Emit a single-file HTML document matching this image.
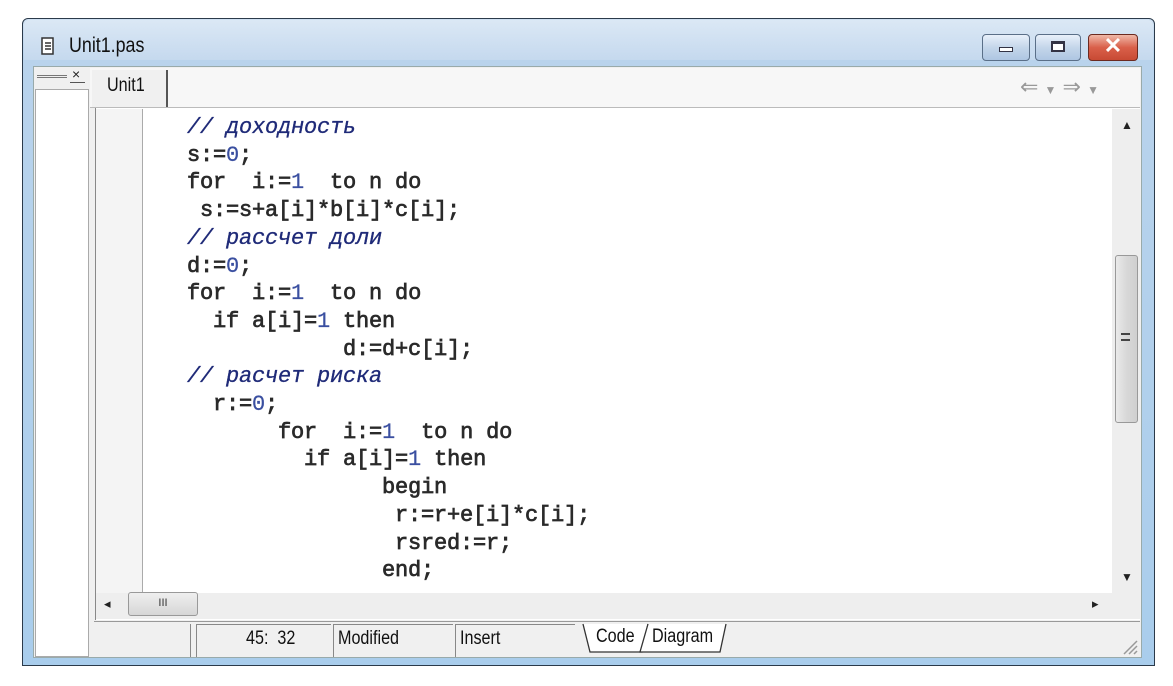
<!DOCTYPE html>
<html><head><meta charset="utf-8"><style>
*{margin:0;padding:0;box-sizing:border-box}
body{width:1173px;height:686px;background:#fff;position:relative;overflow:hidden;font-family:"Liberation Sans",sans-serif}
.a{position:absolute}
.code{font-family:"Liberation Mono",monospace;font-size:22px;color:#2a2a2a;font-weight:normal;-webkit-text-stroke:0.7px #2a2a2a;white-space:pre;letter-spacing:-0.2px}
.c{color:#1f2a78;font-style:italic;-webkit-text-stroke:0.3px #1f2a78}
.n{color:#3a4fa0;-webkit-text-stroke:0.2px #3a4fa0}
.nar{transform:scaleX(0.85);transform-origin:left}
</style></head><body>
<div class="a" style="left:22px;top:18px;width:1133px;height:648px;border:1px solid #2b3a4a;border-radius:6px 6px 0 0;background:linear-gradient(#cfe0f2,#b9d3ec 40px,#a9cdec)"></div>
<div class="a" style="left:24px;top:20px;width:1129px;height:40px;background:linear-gradient(#dbe8f5,#c5d9ee);border-radius:5px 5px 0 0"></div>
<svg class="a" style="left:40px;top:37px" width="16" height="20"><rect x="2" y="1" width="11" height="16" fill="#fff" stroke="#333" stroke-width="1.5"/><path d="M5 6h6M5 9h6M5 12h6" stroke="#333" stroke-width="1.5"/></svg>
<div class="a nar" style="left:69px;top:34px;font-size:21px;color:#111">Unit1.pas</div>
<div class="a" style="left:982px;top:34px;width:48px;height:27px;border:1px solid #5a6f88;border-radius:4px;background:linear-gradient(#e8f0fa,#c4d6ea 50%,#aec6e2)"></div>
<div class="a" style="left:999px;top:47px;width:14px;height:5px;border:1.5px solid #334;background:#fff"></div>
<div class="a" style="left:1035px;top:34px;width:46px;height:27px;border:1px solid #5a6f88;border-radius:4px;background:linear-gradient(#e8f0fa,#c4d6ea 50%,#aec6e2)"></div>
<div class="a" style="left:1051px;top:41px;width:14px;height:11px;border:2px solid #334;border-top-width:3px;background:#fff"></div>
<div class="a" style="left:1088px;top:34px;width:50px;height:27px;border:1px solid #6b2a20;border-radius:4px;background:linear-gradient(#f0b8a8,#d9604a 50%,#c84a34)"></div>
<div class="a" style="left:1100px;top:33px;width:26px;font-size:22px;font-weight:bold;color:#fff;text-align:center">✕</div>
<div class="a" style="left:33px;top:66px;width:1109px;height:592px;background:#f0f0f0;border:1px solid #9aa"></div>
<div class="a" style="left:35px;top:70px;width:54px;height:20px;background:#f0f0f0"></div>
<div class="a" style="left:37px;top:75px;width:30px;height:3px;border-top:1px solid #777;border-bottom:1px solid #777"></div>
<div class="a" style="left:72px;top:66px;font-size:14px;color:#222">×</div>
<div class="a" style="left:70px;top:82px;width:15px;border-top:1px solid #555"></div>
<div class="a" style="left:35px;top:89px;width:54px;height:568px;background:#fff;border:1px solid #aaa"></div>
<div class="a" style="left:90px;top:68px;width:1050px;height:40px;background:#f7f7f7"></div>
<div class="a" style="left:92px;top:70px;width:76px;height:38px;background:#f0f0f0;border-right:2px solid #555"></div>
<div class="a nar" style="left:107px;top:75px;font-size:19px;color:#111">Unit1</div>
<div class="a" style="left:1020px;top:74px;font-size:22px;color:#999">⇐ <span style="font-size:12px">▼</span> ⇒ <span style="font-size:12px">▼</span></div>
<div class="a" style="left:90px;top:107px;width:1050px;border-top:1px solid #bbb"></div>
<div class="a" style="left:95px;top:108px;width:1045px;height:512px;background:#fff;border-left:1px solid #888"></div>
<div class="a" style="left:96px;top:109px;width:47px;height:484px;background:#f4f4f4;border-right:1px solid #aaa"></div>
<div class="a" style="left:1112px;top:109px;width:28px;height:484px;background:#eee"></div>
<div class="a" style="left:1121px;top:118px;font-size:12px;color:#222">▲</div>
<div class="a" style="left:1115px;top:255px;width:23px;height:168px;border:1px solid #999;border-radius:3px;background:linear-gradient(90deg,#eaeaea,#d8d8d8 50%,#cfcfcf)"></div>
<div class="a" style="left:1121px;top:333px;width:9px;height:8px;border-top:2px solid #444;border-bottom:2px solid #444"></div>
<div class="a" style="left:1121px;top:570px;font-size:12px;color:#222">▼</div>
<div class="a" style="left:96px;top:593px;width:1044px;height:26px;background:#eee"></div>
<div class="a" style="left:104px;top:596px;font-size:13px;color:#222">◂</div>
<div class="a" style="left:128px;top:592px;width:70px;height:24px;border:1px solid #999;border-radius:3px;background:linear-gradient(#efefef,#d6d6d6);font-size:11px;text-align:center;line-height:20px;color:#333">III</div>
<div class="a" style="left:1092px;top:596px;font-size:13px;color:#222">▸</div>
<div class="a" style="left:94px;top:621px;width:1046px;height:36px;background:#f0f0f0;border-top:1px solid #999"></div>
<div class="a" style="left:190px;top:624px;height:33px;border-left:1px solid #888"></div>
<div class="a" style="left:196px;top:624px;width:135px;height:33px;border-left:1px solid #888;border-top:1px solid #888"></div>
<div class="a" style="left:333px;top:624px;width:120px;height:33px;border-left:1px solid #888;border-top:1px solid #888"></div>
<div class="a" style="left:455px;top:624px;width:120px;height:33px;border-left:1px solid #888;border-top:1px solid #888"></div>
<div class="a nar" style="left:246px;top:628px;font-size:19px;color:#111">45:&nbsp; 32</div>
<div class="a nar" style="left:338px;top:628px;font-size:19px;color:#111">Modified</div>
<div class="a nar" style="left:460px;top:628px;font-size:19px;color:#111">Insert</div>
<svg class="a" style="left:580px;top:622px" width="150" height="35"><path d="M3 2 L10 30 H62 L68 2" fill="#fff" stroke="#333" stroke-width="1.3"/><path d="M68 2 L60 30 H140 L146 2" fill="#fff" stroke="#333" stroke-width="1.3"/></svg>
<div class="a nar" style="left:596px;top:626px;font-size:19px;color:#111">Code</div>
<div class="a nar" style="left:652px;top:626px;font-size:19px;color:#111">Diagram</div>
<svg class="a" style="left:1120px;top:637px" width="18" height="18"><path d="M4 17L17 4M9 17L17 9M14 17L17 14" stroke="#999" stroke-width="1.5"/></svg>
<div class="a code" style="left:187px;top:114px;line-height:27.7px"><span class="c">// доходность</span>
s:=<span class="n">0</span>;
for  i:=<span class="n">1</span>  to n do
 s:=s+a[i]*b[i]*c[i];
<span class="c">// рассчет доли</span>
d:=<span class="n">0</span>;
for  i:=<span class="n">1</span>  to n do
  if a[i]=<span class="n">1</span> then
            d:=d+c[i];
<span class="c">// расчет риска</span>
  r:=<span class="n">0</span>;
       for  i:=<span class="n">1</span>  to n do
         if a[i]=<span class="n">1</span> then
               begin
                r:=r+e[i]*c[i];
                rsred:=r;
               end;</div>
</body></html>
